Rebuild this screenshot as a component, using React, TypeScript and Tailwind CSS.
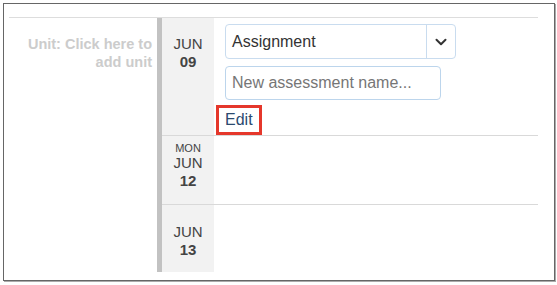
import React from 'react';

const DateCell: React.FC<{ day?: string; month: string; date: string; pad: string }> = ({ day, month, date, pad }) => (
    <div className={`w-[52px] shrink-0 bg-[#f2f2f2] text-center text-[#444] ${pad}`}>
        {day && <div className="text-[11px] leading-[12px]">{day}</div>}
        <div className="text-[15px] leading-[18px]">{month}</div>
        <div className="text-[15px] leading-[18px] font-bold">{date}</div>
    </div>
);

const App: React.FC = () => {
    return (
        <div className="w-[557px] h-[285px] bg-white pl-[3px] pt-[3px] font-['Liberation_Sans',Arial,sans-serif]">
            <div className="w-[552px] h-[278px] border border-[#666] shadow-[1px_1px_0_#aaa] pl-[5px] pt-[13px]">
                <div className="flex w-[529px] border-t border-[#ddd]">
                    <div className="w-[148px] shrink-0 pr-[5px] pt-[17px] text-right text-[14.5px] leading-[18px] font-bold text-[#cccccc]">
                        Unit: Click here to
                        <br />
                        add unit
                    </div>
                    <div className="flex-1 border-l-[5px] border-[#c2c2c2]">
                        {/* row 1 */}
                        <div className="flex h-[118px] border-b border-[#d9d9d9]">
                            <DateCell month="JUN" date="09" pad="pt-[17px]" />
                            <div className="pt-[6px]">
                                <div className="ml-[11px] flex h-[35px] w-[231px] rounded-[4px] border border-[#c9dcef]">
                                    <div className="flex-1 pl-[6px] text-[16px] leading-[33px] text-[#333]">Assignment</div>
                                    <div className="flex w-[29px] items-center justify-center border-l border-[#c9dcef]">
                                        <svg width="12" height="8" viewBox="0 0 12 8" fill="none">
                                            <path d="M1.5 1.8 L6 6.2 L10.5 1.8" stroke="#333" strokeWidth="2" strokeLinecap="round" strokeLinejoin="round" />
                                        </svg>
                                    </div>
                                </div>
                                <input
                                    type="text"
                                    placeholder="New assessment name..."
                                    className="ml-[11px] mt-[7px] block h-[34px] w-[216px] rounded-[4px] border border-[#bcd5ec] px-[6px] text-[16px] text-[#333] outline-none placeholder:text-[#767676]"
                                />
                                <div className="ml-[2px] mt-[5px] inline-block border-[3px] border-[#e5372b] px-[6px] text-[16px] leading-[24px] text-[#2b4a6f]">
                                    Edit
                                </div>
                            </div>
                        </div>
                        {/* row 2 */}
                        <div className="flex h-[69px] border-b border-[#d9d9d9]">
                            <DateCell day="MON" month="JUN" date="12" pad="pt-[6px]" />
                        </div>
                        {/* row 3 */}
                        <div className="flex h-[67px]">
                            <DateCell month="JUN" date="13" pad="pt-[18px]" />
                        </div>
                    </div>
                </div>
            </div>
        </div>
    );
};

export default App;
